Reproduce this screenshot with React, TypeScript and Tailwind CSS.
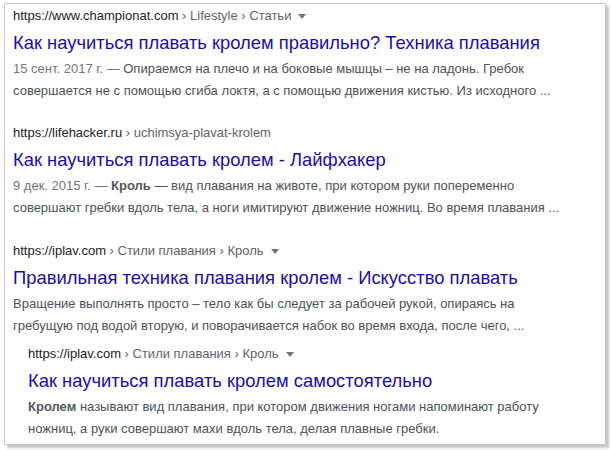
import type { ReactNode } from 'react'

type Result = {
  site: string
  crumbs: string
  caret: boolean
  title: string
  lines: ReactNode[]
  gap: string
  nested?: boolean
}

function Caret() {
  return (
    <svg className="ml-[7px] inline-block" width="8" height="5" viewBox="0 0 8 5">
      <path d="M0 0h8L4 5z" fill="#70757a" />
    </svg>
  )
}

const results: Result[] = [
  {
    site: 'https://www.championat.com',
    crumbs: ' › Lifestyle › Статьи',
    caret: true,
    title: 'Как научиться плавать кролем правильно? Техника плавания',
    lines: [
      <>
        <span className="text-[#70757a]">15 сент. 2017 г. — </span>
        Опираемся на плечо и на боковые мышцы – не на ладонь. Гребок
      </>,
      <>совершается не с помощью сгиба локтя, а с помощью движения кистью. Из исходного ...</>,
    ],
    gap: 'mt-0',
  },
  {
    site: 'https://lifehacker.ru',
    crumbs: ' › uchimsya-plavat-krolem',
    caret: false,
    title: 'Как научиться плавать кролем - Лайфхакер',
    lines: [
      <>
        <span className="text-[#70757a]">9 дек. 2015 г. — </span>
        <b className="text-[#52565b]">Кроль</b> — вид плавания на животе, при котором руки
        попеременно
      </>,
      <>совершают гребки вдоль тела, а ноги имитируют движение ножниц. Во время плавания ...</>,
    ],
    gap: 'mt-[22px]',
  },
  {
    site: 'https://iplav.com',
    crumbs: ' › Стили плавания › Кроль',
    caret: true,
    title: 'Правильная техника плавания кролем - Искусство плавать',
    lines: [
      <>Вращение выполнять просто – тело как бы следует за рабочей рукой, опираясь на</>,
      <>гребущую под водой вторую, и поворачивается набок во время входа, после чего, ...</>,
    ],
    gap: 'mt-[23px]',
  },
  {
    site: 'https://iplav.com',
    crumbs: ' › Стили плавания › Кроль',
    caret: true,
    title: 'Как научиться плавать кролем самостоятельно',
    lines: [
      <>
        <b className="text-[#52565b]">Кролем</b> называют вид плавания, при котором движения
        ногами напоминают работу
      </>,
      <>ножниц, а руки совершают махи вдоль тела, делая плавные гребки.</>,
    ],
    gap: 'mt-[8px]',
    nested: true,
  },
]

export default function App() {
  return (
    <div className="w-[611px] h-[450px] bg-white pl-[4px] pt-[3px] font-['Liberation_Sans',Arial,sans-serif]">
      <div className="w-[602px] h-[442px] border border-[#c8c8c8] bg-white shadow-[3px_3px_2px_rgba(0,0,0,0.22)] pl-[8px] pt-[3px]">
        {results.map((r, i) => (
          <div key={i} className={`${r.gap} ${r.nested ? 'pl-[15px]' : ''}`}>
            <div className="flex items-center h-[18px] text-[13px] leading-[18px] whitespace-nowrap">
              <span className="text-[#202124]">{r.site}</span>
              <span className="text-[#5f6368] whitespace-pre">{r.crumbs}</span>
              {r.caret && <Caret />}
            </div>
            <div className="mt-[5px] text-[18.4px] leading-[26px] text-[#1a0dab] whitespace-nowrap">
              {r.title}
            </div>
            <div className="mt-[2px] text-[13px] leading-[22px] text-[#4d5156] whitespace-nowrap">
              {r.lines.map((l, j) => (
                <div key={j}>{l}</div>
              ))}
            </div>
          </div>
        ))}
      </div>
    </div>
  )
}
